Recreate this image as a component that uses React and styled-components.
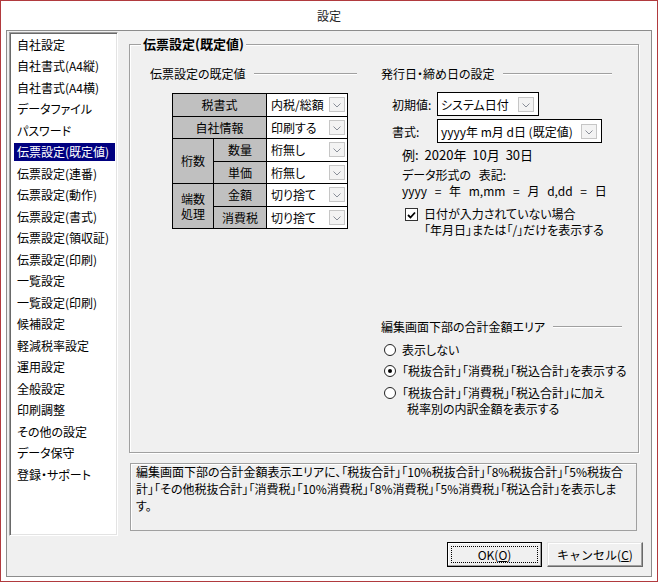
import React from "react";
import styled, { createGlobalStyle, css } from "styled-components";

const GlobalStyle = createGlobalStyle`
  html, body { margin: 0; padding: 0; background: #fff; }
  body {
    font-family: "Noto Sans CJK JP", "Noto Sans", sans-serif;
    font-size: 12px;
    color: #000;
    font-feature-settings: "palt";
  }
  * { box-sizing: border-box; }
`;

const Window = styled.div`
  width: 658px;
  height: 582px;
  border: 1px solid #b13a3e;
  background: #fff;
  display: flex;
  flex-direction: column;
  padding: 0 5px 4px;
`;

const TitleBar = styled.div`
  flex: none;
  height: 29px;
  line-height: 29px;
  text-align: center;
  font-size: 12px;
  color: #222;
`;

const Client = styled.div`
  flex: 1;
  display: flex;
  flex-direction: column;
  background: #f0f0f0;
  border: 1px solid #8c8c8c;
`;

const Body = styled.div`
  flex: 1;
  display: flex;
  align-items: flex-start;
  min-height: 0;
`;

const NavList = styled.ul`
  flex: none;
  list-style: none;
  margin: 1px 0 0 2px;
  padding: 1px 0 0 0;
  width: 109px;
  height: 504px;
  background: #fff;
  border: 1px solid;
  border-color: #a0a0a0 #fff #fff #a0a0a0;
  box-shadow: inset 1px 1px 0 #696969, inset -1px -1px 0 #e3e3e3;
`;

const NavItem = styled.li`
  height: 21.5px;
  display: flex;
  align-items: center;
  padding-left: 4px;
`;

const NavLabel = styled.span`
  display: block;
  width: 101px;
  height: 18px;
  line-height: 18px;
  padding-left: 3px;
  white-space: nowrap;
  ${(p) =>
    p.$active &&
    css`
      background: #000080;
      color: #fff;
    `}
`;

const Main = styled.div`
  flex: none;
  width: 510px;
  margin: 13px 0 0 11px;
  display: flex;
  flex-direction: column;
`;

const GroupBox = styled.section`
  position: relative;
  height: 409px;
  border: 1px solid #a0a0a0;
  box-shadow: 1px 1px 0 #fff, inset 1px 1px 0 #fff;
  padding: 21px 0 0 20px;
  display: flex;
  gap: 24px;
`;

const GroupTitle = styled.h2`
  position: absolute;
  top: -9px;
  left: 11px;
  margin: 0;
  padding: 0 2px;
  background: #f0f0f0;
  font-size: 13px;
  font-weight: 700;
  line-height: 16px;
  white-space: nowrap;
`;

const Column = styled.div`
  flex: none;
  width: ${(p) => p.$width}px;
  display: flex;
  flex-direction: column;
`;

const SectionHeader = styled.div`
  display: flex;
  align-items: center;
  width: ${(p) => p.$width}px;
  height: 16px;
  line-height: 16px;
  white-space: nowrap;
  &::after {
    content: "";
    flex: 1;
    margin-left: 8px;
    border-top: 1px solid #a0a0a0;
    border-bottom: 1px solid #fff;
  }
`;

const SettingsGrid = styled.div`
  display: grid;
  grid-template-columns: 40px 52px 80px;
  grid-template-rows: repeat(6, 21.5px);
  gap: 1px;
  width: max-content;
  background: #000;
  border: 1px solid #000;
  margin: 11px 0 0 22px;
`;

const LabelCell = styled.div`
  grid-column: ${(p) => p.$col};
  grid-row: ${(p) => p.$row};
  background: #c0c0c0;
  display: flex;
  align-items: center;
  justify-content: center;
  text-align: center;
  line-height: 15.5px;
`;

const ValueCell = styled.div`
  grid-column: 3;
  grid-row: ${(p) => p.$row};
  background: #fff;
  display: flex;
  align-items: center;
  justify-content: space-between;
  padding: 0 2px 0 4px;
  white-space: nowrap;
`;

const DropBtn = styled.span`
  flex: none;
  width: 16px;
  height: 15px;
  border: 1px solid #c6c6c6;
  background: #f3f3f3;
  display: flex;
  align-items: flex-end;
  justify-content: center;
  padding-bottom: 3px;
`;

const DropButton = () => (
  <DropBtn>
    <svg width="8" height="5" viewBox="0 0 8 5">
      <path d="M0.5 0.5 L4 4 L7.5 0.5" fill="none" stroke="#8a8f99" strokeWidth="1" />
    </svg>
  </DropBtn>
);

const FieldRow = styled.div`
  display: flex;
  align-items: center;
  padding-left: 11px;
  margin-top: ${(p) => p.$mt}px;
`;

const FieldLabel = styled.span`
  flex: none;
  width: 45px;
  white-space: nowrap;
`;

const Combo = styled.div`
  width: ${(p) => p.$width}px;
  height: 24px;
  border: 1px solid #000;
  background: #fff;
  display: flex;
  align-items: center;
  justify-content: space-between;
  padding: 0 4px 0 3px;
  white-space: nowrap;
`;

const InfoText = styled.div`
  padding-left: 21px;
  font-size: ${(p) => p.$size}px;
  word-spacing: ${(p) => p.$ws}px;
  line-height: ${(p) => p.$lh}px;
  margin-top: ${(p) => p.$mt}px;
  white-space: nowrap;
`;

const CheckRow = styled.div`
  display: flex;
  align-items: flex-start;
  gap: 6px;
  padding-left: 24px;
  margin-top: 7px;
  line-height: 16px;
  white-space: nowrap;
`;

const CheckBox = styled.span`
  flex: none;
  width: 13px;
  height: 13px;
  margin-top: 2px;
  border: 1px solid #333;
  background: #fff;
  display: flex;
  align-items: center;
  justify-content: center;
`;

const RadioGroup = styled.div`
  margin-top: 81px;
  display: flex;
  flex-direction: column;
`;

const RadioRow = styled.div`
  display: flex;
  align-items: flex-start;
  gap: 6px;
  padding-left: 3px;
  margin-top: ${(p) => p.$mt}px;
  line-height: 16px;
  white-space: nowrap;
`;

const RadioCircle = styled.span`
  flex: none;
  width: 12px;
  height: 12px;
  margin-top: 2px;
  border-radius: 50%;
  border: 1px solid #222;
  background: #fff;
  display: flex;
  align-items: center;
  justify-content: center;
  &::after {
    content: "";
    width: 4px;
    height: 4px;
    border-radius: 50%;
    background: ${(p) => (p.$checked ? "#000" : "transparent")};
  }
`;

const Indent = styled.span`
  display: block;
  padding-left: ${(p) => p.$pad}px;
`;

const DescBox = styled.div`
  height: 68px;
  margin: 10px 2px 0 1px;
  border: 1px solid #a0a0a0;
  box-shadow: inset 1px 1px 0 #fff;
  padding: 0 5px;
  line-height: 17px;
  white-space: nowrap;
`;

const DescText = styled.p`
  margin: -1px 0 0;
`;

const ButtonBar = styled.div`
  flex: none;
  display: flex;
  justify-content: flex-end;
  gap: 5px;
  padding: 0 8px 9px 0;
`;

const DialogButton = styled.button`
  width: ${(p) => p.$w}px;
  height: 25px;
  padding: 0;
  font-family: inherit;
  font-size: 12px;
  color: #000;
  background: #f0f0f0;
  border: 1px solid;
  border-color: #e3e3e3 #696969 #696969 #e3e3e3;
  box-shadow: inset -1px -1px 0 #a0a0a0, inset 1px 1px 0 #fff;
  ${(p) =>
    p.$default &&
    css`
      border-color: #000;
      outline: 1px dotted #000;
      outline-offset: -5px;
    `}
`;

const Mnemonic = styled.span`
  text-decoration: underline;
`;

const navItems = [
  "自社設定",
  "自社書式(A4縦)",
  "自社書式(A4横)",
  "データファイル",
  "パスワード",
  "伝票設定(既定値)",
  "伝票設定(連番)",
  "伝票設定(動作)",
  "伝票設定(書式)",
  "伝票設定(領収証)",
  "伝票設定(印刷)",
  "一覧設定",
  "一覧設定(印刷)",
  "候補設定",
  "軽減税率設定",
  "運用設定",
  "全般設定",
  "印刷調整",
  "その他の設定",
  "データ保守",
  "登録・サポート",
];

const valueRows = ["内税/総額", "印刷する", "桁無し", "桁無し", "切り捨て", "切り捨て"];

export default function App() {
  return (
    <>
      <GlobalStyle />
      <Window>
        <TitleBar>設定</TitleBar>
        <Client>
          <Body>
            <NavList>
              {navItems.map((item) => (
                <NavItem key={item}>
                  <NavLabel $active={item === "伝票設定(既定値)"}>{item}</NavLabel>
                </NavItem>
              ))}
            </NavList>
            <Main>
              <GroupBox>
                <GroupTitle>伝票設定(既定値)</GroupTitle>
                <Column $width={207}>
                  <SectionHeader $width={207}>伝票設定の既定値</SectionHeader>
                  <SettingsGrid>
                    <LabelCell $col="1 / 3" $row="1">税書式</LabelCell>
                    <LabelCell $col="1 / 3" $row="2">自社情報</LabelCell>
                    <LabelCell $col="1" $row="3 / 5">桁数</LabelCell>
                    <LabelCell $col="2" $row="3">数量</LabelCell>
                    <LabelCell $col="2" $row="4">単価</LabelCell>
                    <LabelCell $col="1" $row="5 / 7">
                      端数
                      <br />
                      処理
                    </LabelCell>
                    <LabelCell $col="2" $row="5">金額</LabelCell>
                    <LabelCell $col="2" $row="6">消費税</LabelCell>
                    {valueRows.map((v, i) => (
                      <ValueCell key={i} $row={i + 1}>
                        <span>{v}</span>
                        <DropButton />
                      </ValueCell>
                    ))}
                  </SettingsGrid>
                </Column>
                <Column $width={241}>
                  <SectionHeader $width={231}>発行日・締め日の設定</SectionHeader>
                  <FieldRow $mt={10}>
                    <FieldLabel>初期値:</FieldLabel>
                    <Combo $width={102}>
                      <span>システム日付</span>
                      <DropButton />
                    </Combo>
                  </FieldRow>
                  <FieldRow $mt={3}>
                    <FieldLabel>書式:</FieldLabel>
                    <Combo $width={165}>
                      <span>yyyy年 m月 d日 (既定値)</span>
                      <DropButton />
                    </Combo>
                  </FieldRow>
                  <InfoText $size={13} $ws={3} $lh={16} $mt={4}>
                    例: 2020年 10月 30日
                  </InfoText>
                  <InfoText $size={12} $ws={5} $lh={16} $mt={4}>
                    データ形式の 表記:
                    <br />
                    yyyy = 年 m,mm = 月 d,dd = 日
                  </InfoText>
                  <CheckRow>
                    <CheckBox>
                      <svg width="9" height="8" viewBox="0 0 9 8">
                        <path d="M1 4 L3.5 6.5 L8 1.5" fill="none" stroke="#000" strokeWidth="1.8" />
                      </svg>
                    </CheckBox>
                    <span>
                      日付が入力されていない場合
                      <br />
                      「年月日」または「/」だけを表示する
                    </span>
                  </CheckRow>
                  <RadioGroup>
                    <SectionHeader $width={241}>編集画面下部の合計金額エリア</SectionHeader>
                    <RadioRow $mt={7}>
                      <RadioCircle />
                      <span>表示しない</span>
                    </RadioRow>
                    <RadioRow $mt={5}>
                      <RadioCircle $checked />
                      <span>「税抜合計」「消費税」「税込合計」を表示する</span>
                    </RadioRow>
                    <RadioRow $mt={6}>
                      <RadioCircle />
                      <span>
                        <Indent $pad={0}>「税抜合計」「消費税」「税込合計」に加え</Indent>
                        <Indent $pad={5}>税率別の内訳金額を表示する</Indent>
                      </span>
                    </RadioRow>
                  </RadioGroup>
                </Column>
              </GroupBox>
              <DescBox>
                <DescText>
                  編集画面下部の合計金額表示エリアに、「税抜合計」「10%税抜合計」「8%税抜合計」「5%税抜合
                  <br />
                  計」「その他税抜合計」「消費税」「10%消費税」「8%消費税」「5%消費税」「税込合計」を表示しま
                  <br />
                  す。
                </DescText>
              </DescBox>
            </Main>
          </Body>
          <ButtonBar>
            <DialogButton $w={95} $default>
              OK(<Mnemonic>O</Mnemonic>)
            </DialogButton>
            <DialogButton $w={96}>
              キャンセル(<Mnemonic>C</Mnemonic>)
            </DialogButton>
          </ButtonBar>
        </Client>
      </Window>
    </>
  );
}
